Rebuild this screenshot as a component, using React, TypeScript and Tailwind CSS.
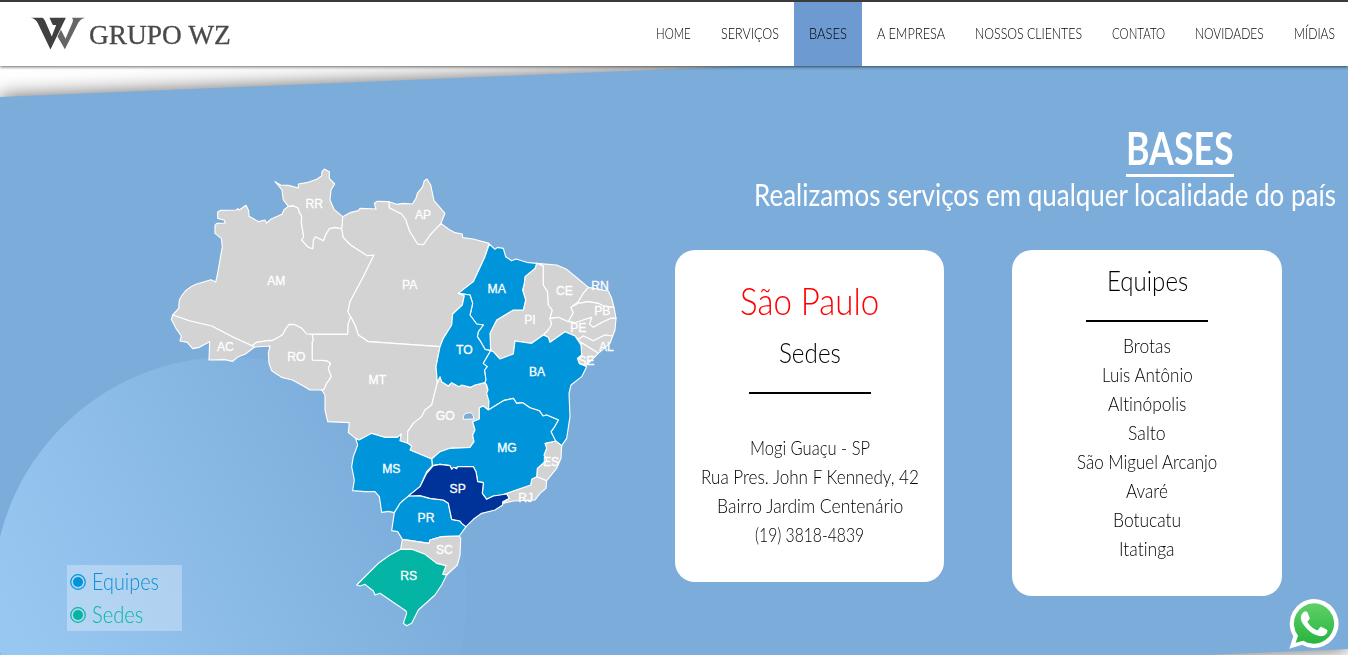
import { useLayoutEffect, useRef, useState, type ReactNode } from "react";

/** Single line of text condensed or stretched horizontally to a given width. */
function Fit({ w, children, className = "" }: { w: number; children: ReactNode; className?: string }) {
  const ref = useRef<HTMLSpanElement>(null);
  const [scale, setScale] = useState(1);
  useLayoutEffect(() => {
    if (ref.current) setScale(w / ref.current.offsetWidth);
  }, [w]);
  return (
    <span className={`flex justify-start whitespace-nowrap ${className}`} style={{ width: w }}>
      <span ref={ref} className="block shrink-0 origin-left" style={{ transform: `scaleX(${scale})` }}>
        {children}
      </span>
    </span>
  );
}

const nav: [string, number][] = [
  ["HOME", 35],
  ["SERVIÇOS", 58],
  ["BASES", 38],
  ["A EMPRESA", 68],
  ["NOSSOS CLIENTES", 107],
  ["CONTATO", 53],
  ["NOVIDADES", 69],
  ["MÍDIAS", 41],
];

const GRAY = "#d3d3d3";
const BLUE = "#0095db";
const NAVY = "#003399";
const TEAL = "#04b5a5";

type State = { id: string; fill: string; x: number; y: number; d: string };

const states: State[] = [
  { id: "AM", fill: GRAY, x: 349, y: 363, d: "M38 465 56 445 58 420Q75 385 108 373L153 359 167 366 172 345 187 260 184 235 165 220 165 196 170 190 196 189 192 180 173 175 173 156 182 151 229 150 233 146 238 150 258 136 266 152 267 169 296 185 315 180 320 189 332 178 366 163 372 149 385 139 400 137 415 145 418 158 425 168 424 188 431 230 425 240 445 262 458 266 460 240 467 230 490 242 498 222 508 206 525 202 545 206 550 232 572 255 622 287 642 285 610 350 570 425 564 455 572 470 565 490 563 523 440 522 425 505 405 494 388 493 378 505 368 524 345 538 332 543 329 541 290 547 276 557 220 532 155 498 90 483Z" },
  { id: "AC", fill: GRAY, x: 196, y: 561, d: "M38 465 34 478 48 505 64 528 60 543 82 547 98 566 118 562 149 545 147 600 195 599 218 604 235 590 255 583 284 561 276 557 220 532 155 498 90 483Z" },
  { id: "RO", fill: GRAY, x: 409, y: 590, d: "M276 557 290 547 329 541 332 543 345 538 368 524 378 505 388 493 405 494 425 505 440 522 457 523 460 540 457 545 457 600 500 602 512 610 505 625 514 650 500 670 492 688 485 690 450 690 430 678 397 660 365 652 335 632 327 610 325 580 330 558 284 561Z" },
  { id: "RR", fill: GRAY, x: 463, y: 131, d: "M345 65 362 75 385 76 415 84 415 72 440 68 470 58 485 48 486 35 493 27 508 35 508 55 524 72 513 90 510 120 522 148 548 170 547 195 545 206 525 202 508 206 498 222 490 242 467 230 460 240 458 266 445 262 425 240 431 230 424 188 425 168 418 158 415 145 400 137 385 139 370 120 366 90 355 76Z" },
  { id: "PA", fill: GRAY, x: 749, y: 374, d: "M548 170 570 158 595 152 600 145 648 147 643 130 652 124 687 125 688 143 725 162 738 180 748 212 773 252 790 254 810 225 843 190 865 207 885 218 907 222 908 233 940 237 987 250 975 290 940 365 895 400 913 407 907 435 878 462 875 495 850 535 840 560 625 545 595 525 585 495 572 470 564 455 570 425 610 350 642 285 622 287 572 255 550 232 545 206 547 195Z" },
  { id: "AP", fill: GRAY, x: 789, y: 164, d: "M687 125 710 133 730 130 757 132 768 115 772 100 788 80 793 62 801 57 812 75 822 122 855 160 843 190 810 225 790 254 773 252 748 212 738 180 725 162 688 143Z" },
  { id: "MT", fill: GRAY, x: 652, y: 659, d: "M457 523 563 523 565 490 572 470 585 495 595 525 625 545 840 560 828 620 832 668 815 735 795 750 785 770 760 790 743 815 743 850 720 842 724 822 712 832 675 832 635 820 597 840 587 835 565 818 568 788 503 785 495 750 495 705 485 690 492 688 500 670 514 650 505 625 512 610 500 602 457 600 457 545 460 540Z" },
  { id: "GO", fill: GRAY, x: 856, y: 767, d: "M832 668 840 650 845 665 865 678 875 668 897 680 905 675 932 682 945 675 975 668 980 675 987 725 985 750 970 738 958 743 958 777 938 785 945 810 938 825 942 845 930 862 870 865 840 875 815 897 750 870 755 858 743 850 743 815 760 790 785 770 795 750 815 735Z" },
  { id: "PI", fill: GRAY, x: 1110, y: 479, d: "M1130 310 1150 317 1150 375 1163 395 1165 435 1177 450 1170 475 1175 492 1165 510 1150 525 1115 550 1065 543 1060 582 1020 597 1000 575 992 572 990 520 1010 480 1060 450 1090 450 1097 420 1088 390 1093 370 1095 350 1125 325Z" },
  { id: "CE", fill: GRAY, x: 1213, y: 393, d: "M1130 310 1190 315 1220 328 1255 357 1285 382 1270 400 1255 425 1233 442 1240 458 1225 485 1195 472 1170 475 1177 450 1165 435 1163 395 1150 375 1150 317Z" },
  { id: "RN", fill: GRAY, x: 1320, y: 378, d: "M1285 382 1345 393 1355 415 1362 442 1330 438 1315 430 1285 425 1255 430 1233 442 1255 425 1270 400Z" },
  { id: "PB", fill: GRAY, x: 1327, y: 452, d: "M1362 442 1368 475 1355 474 1330 485 1300 502 1288 492 1295 472 1245 488 1225 485 1240 458 1233 442 1255 430 1285 425 1315 430 1330 438Z" },
  { id: "PE", fill: GRAY, x: 1255, y: 503, d: "M1368 475 1365 510 1358 528 1335 525 1300 542 1270 528 1255 538 1245 528 1215 515 1170 547 1165 532 1150 525 1165 510 1175 492 1170 475 1195 472 1225 485 1245 488 1295 472 1288 492 1300 502 1330 485 1355 474Z" },
  { id: "AL", fill: GRAY, x: 1339, y: 559, d: "M1358 528 1350 550 1315 580 1260 545 1255 538 1270 528 1300 542 1335 525Z" },
  { id: "SE", fill: GRAY, x: 1279, y: 602, d: "M1315 580 1295 600 1275 618 1258 610 1252 595 1265 585 1263 555 1260 545Z" },
  { id: "MA", fill: BLUE, x: 1010, y: 387, d: "M988 252 1005 268 1012 262 1030 265 1037 290 1055 302 1068 297 1100 307 1130 310 1125 325 1095 350 1093 370 1088 390 1097 420 1090 450 1060 450 1010 480 990 520 992 572 975 568 962 545 952 530 955 515 970 495 950 492 930 465 938 430 930 405 895 400 940 365 975 290Z" },
  { id: "TO", fill: BLUE, x: 913, y: 569, d: "M895 400 930 405 938 430 930 465 950 492 970 495 955 515 952 530 962 545 975 568 992 572 970 610 982 620 974 630 978 660 975 668 945 675 932 682 905 675 897 680 875 668 865 678 845 665 840 650 832 668 828 620 840 560 850 535 875 495 878 462 907 435 913 407Z" },
  { id: "BA", fill: BLUE, x: 1131, y: 635, d: "M992 572 1000 575 1020 597 1060 582 1065 543 1115 550 1150 525 1165 532 1170 547 1215 515 1245 528 1263 555 1265 585 1252 595 1258 610 1280 620 1265 650 1233 675 1227 700 1230 770 1220 835 1205 857 1185 842 1173 815 1182 803 1195 780 1160 765 1149 768 1138 752 1110 743 1088 728 1070 730 1060 715 1030 722 985 750 987 725 980 700 984 690 980 675 975 668 978 660 974 630 982 620 970 610Z" },
  { id: "ES", fill: GRAY, x: 1173, y: 905, d: "M1187 843 1205 857 1203 895 1190 925 1160 962 1130 950 1132 925 1160 900 1152 885 1160 865 1155 850Z" },
  { id: "RJ", fill: GRAY, x: 1097, y: 1012, d: "M1130 950 1160 962 1158 985 1140 1000 1125 1020 1060 1023 1028 1030 1048 1015 1040 1002 1000 1008 1025 1005 1075 988 1112 975 1115 958Z" },
  { id: "MG", fill: BLUE, x: 1041, y: 864, d: "M815 897 840 875 870 865 930 862 942 845 938 825 945 810 938 785 958 777 958 743 970 738 985 750 1030 722 1060 715 1070 730 1088 728 1110 743 1138 752 1149 768 1160 765 1195 780 1182 803 1173 815 1187 843 1155 850 1160 865 1152 885 1160 900 1132 925 1130 950 1115 958 1112 975 1075 988 1025 1005 1000 1008 980 1018 967 1000 970 968 953 965 948 935 940 920 890 922 875 928 870 917 840 913 817 917Z" },
  { id: "MS", fill: BLUE, x: 694, y: 925, d: "M587 835 597 840 635 820 675 832 712 832 724 822 720 842 743 850 755 858 750 870 815 897 817 917 800 935 780 980 747 1007 725 1025 703 1058 685 1054 665 1057 658 1010 645 995 615 995 578 992 583 960 575 920 580 890 593 855Z" },
  { id: "PR", fill: BLUE, x: 798, y: 1073, d: "M747 1007 720 1030 703 1058 695 1112 713 1115 727 1138 807 1150 810 1140 845 1130 898 1128 918 1100 905 1090 900 1083 875 1078 865 1030 850 1020 810 1015 780 1007Z" },
  { id: "SC", fill: GRAY, x: 853, y: 1169, d: "M727 1138 722 1168 755 1168 795 1183 830 1210 858 1217 848 1243 860 1245 892 1215 900 1185 902 1135 898 1128 845 1130 810 1140 807 1150Z" },
  { id: "SP", fill: NAVY, x: 893, y: 986, d: "M745 1008 780 980 800 940 820 917 840 913 870 917 875 928 880 922 890 926 893 920 940 920 948 935 953 965 970 968 967 1000 980 1018 1000 1008 1040 1002 1048 1015 1028 1025 1028 1035 1005 1050 965 1060 940 1078 918 1100 905 1090 900 1083 875 1078 865 1030 850 1020 810 1015 780 1007Z" },
  { id: "RS", fill: TEAL, x: 746, y: 1247, d: "M722 1168 755 1168 795 1183 830 1210 858 1217 848 1243 860 1245 845 1275 825 1305 775 1350 755 1390 740 1397 730 1390 740 1360 738 1353 660 1300 645 1305 640 1293 615 1273 600 1278 590 1275 655 1210 690 1185Z" },
];

function BrazilMap() {
  return (
    <svg viewBox="0 0 1410 1440" className="block h-[480px] w-[470px]">
      {states.map((s) => (
        <path key={s.id} d={s.d} fill={s.fill} stroke="#fff" strokeWidth="3.4" strokeLinejoin="round" />
      ))}
      <path d="M910 778V768Q914 758 928 758 942 759 941 777Z" fill="#7cacd9" stroke="#fff" strokeWidth="3" />
      <g fill="#fff" fontFamily="Liberation Sans, sans-serif" fontSize="36.5" textAnchor="middle" stroke="#fff" strokeWidth="0.9">
        {states.map((s) => (
          <text key={s.id} x={s.x} y={s.y + 13}>{s.id}</text>
        ))}
      </g>
    </svg>
  );
}

function Logo() {
  return (
    <div className="flex items-start pl-[30px] pt-[15px]">
      <svg viewBox="0 0 164 98" className="h-[33px] w-[55px]">
        <path d="M2 2H37Q42 4 45 12L65 58 78 24 68 24 58 2H107L61 97 23 18Q16 4 2 2Z" fill="#404040" />
        <path d="M92 38 106 65 126 18Q131 5 124 2H164Q151 5 144 17L104 96 82 58Z" fill="#666" />
      </svg>
      <Fit w={142} className="ml-[4px] font-['Liberation_Serif',serif] text-[27px] leading-[36px] text-[#4a4a4a] [-webkit-text-stroke:0.3px_#4a4a4a]">
        GRUPO WZ
      </Fit>
    </div>
  );
}

function LegendRow({ label, w, color, text }: { label: string; w: number; color: string; text: string }) {
  return (
    <div className={`flex h-[33px] items-center gap-[6px] pl-[3px] ${text}`}>
      <svg viewBox="0 0 16 16" className="size-4">
        <circle cx="8" cy="8" r="7.3" fill="none" stroke={color} strokeWidth="1.2" />
        <circle cx="8" cy="8" r="5" fill={color} />
      </svg>
      <Fit w={w} className="text-[22.5px] leading-[31px]">{label}</Fit>
    </div>
  );
}

const address: [string, number][] = [
  ["Mogi Guaçu - SP", 120],
  ["Rua Pres. John F Kennedy, 42", 218],
  ["Bairro Jardim Centenário", 186],
  ["(19) 3818-4839", 109],
];

const teams: [string, number][] = [
  ["Brotas", 48],
  ["Luis Antônio", 91],
  ["Altinópolis", 78],
  ["Salto", 38],
  ["São Miguel Arcanjo", 140],
  ["Avaré", 42],
  ["Botucatu", 68],
  ["Itatinga", 56],
];

function WhatsApp() {
  return (
    <svg viewBox="0 0 150 150" className="absolute left-[1289px] top-[599px] size-[50px]">
      <defs>
        <linearGradient id="wa" x1="0" y1="0" x2="0" y2="1">
          <stop offset="0" stopColor="#5fd068" />
          <stop offset="1" stopColor="#28b440" />
        </linearGradient>
      </defs>
      <path d="M75 0A73.500 73.500 0 1 1 39 137.500L1 149 13 112A73.500 73.500 0 0 1 75 0Z" fill="#fff" />
      <path d="M75 13A60.500 60.500 0 1 1 43 125L20 131 27 110A60.500 60.500 0 0 1 75 13Z" fill="url(#wa)" />
      <path
        transform="translate(75 74) scale(6.600) translate(-12 -11.900)"
        fill="#fff"
        d="M17.472 14.382c-.297-.149-1.758-.867-2.03-.967-.273-.099-.471-.148-.67.15-.197.297-.767.966-.94 1.164-.173.199-.347.223-.644.075-.297-.15-1.255-.463-2.39-1.475-.883-.788-1.48-1.761-1.653-2.059-.173-.297-.018-.458.13-.606.134-.133.298-.347.446-.52.149-.174.198-.298.298-.497.099-.198.05-.371-.025-.52-.075-.149-.669-1.612-.916-2.207-.242-.579-.487-.5-.669-.51-.173-.008-.371-.01-.57-.01-.198 0-.52.074-.792.372-.272.297-1.04 1.016-1.04 2.479 0 1.462 1.065 2.875 1.213 3.074.149.198 2.096 3.2 5.077 4.487.709.306 1.262.489 1.694.625.712.227 1.36.195 1.871.118.571-.085 1.758-.719 2.006-1.413.248-.694.248-1.289.173-1.413-.074-.124-.272-.198-.57-.347"
      />
    </svg>
  );
}

export default function App() {
  return (
    <div className="relative flex h-[655px] w-[1348px] flex-col overflow-hidden bg-white font-['Lato',sans-serif] font-light [font-variant-ligatures:none]">
      <header className="relative z-10 flex h-[66px] shrink-0 justify-between border-t-2 border-[#3b3b3b] bg-white shadow-[0_1px_3px_rgba(0,0,0,0.6)]">
        <Logo />
        <nav className="-mr-0.5 flex">
          {nav.map(([label, w]) => (
            <a
              key={label}
              className={`flex items-center px-[15px] pb-0.5 text-[16px] text-black ${label === "BASES" ? "bg-[#6d9ad0]" : ""}`}
            >
              <Fit w={w}>{label}</Fit>
            </a>
          ))}
        </nav>
      </header>

      <div className="absolute inset-0 [filter:drop-shadow(0_0_10px_rgba(0,0,0,0.6))]">
        <div className="relative size-full overflow-hidden bg-[#7cacd9] [clip-path:polygon(0_97px,720px_67px,1348px_41px,1348px_649px,1180px_656px,0_656px)]">
          <div className="absolute -left-[7px] top-[357px] size-[474px] rounded-full bg-[linear-gradient(61deg,#98c8f2_18%,#7eaedb_78%)]" />
        </div>
      </div>

      <main className="relative flex flex-1">
        <div className="w-[655px] shrink-0 pl-[160px] pt-[94px]">
          <BrazilMap />
        </div>
        <aside className="absolute left-[67px] top-[499px] h-[66px] w-[115px] bg-white/30">
          <LegendRow label="Equipes" w={67} color="#0095db" text="text-[#0c8fd6]" />
          <LegendRow label="Sedes" w={51} color="#04b5a5" text="text-[#04b5a5]" />
        </aside>

        <div className="flex flex-1 flex-col pl-5 pt-[54px] text-center text-black">
          <div className="flex flex-col items-end pr-3 text-white">
            <h1 className="mr-[102px] border-b-[3px] border-white font-bold">
              <Fit w={108} className="pt-px text-[46px] leading-[53px]">BASES</Fit>
            </h1>
            <Fit w={582} className="text-[30px] font-normal leading-[34px]">
              Realizamos serviços em qualquer localidade do país
            </Fit>
          </div>

          <div className="mt-[39px] flex items-start gap-[68px]">
            <section className="flex h-[332px] w-[269px] flex-col items-center rounded-[20px] bg-white pt-7">
              <Fit w={139} className="text-[38px] leading-[44px] text-[#f00]">São Paulo</Fit>
              <Fit w={62} className="mt-[14px] text-[27px] leading-[34px]">Sedes</Fit>
              <div className="mb-[39px] mt-[22px] h-0.5 w-[122px] shrink-0 bg-black" />
              {address.map(([line, w]) => (
                <Fit key={line} w={w} className="text-[20px] leading-[29px]">{line}</Fit>
              ))}
            </section>
            <section className="flex h-[346px] w-[270px] flex-col items-center rounded-[20px] bg-white pt-3.5">
              <Fit w={81} className="text-[27px] leading-[34px]">Equipes</Fit>
              <div className="mb-[9px] mt-[22px] h-0.5 w-[122px] shrink-0 bg-black" />
              {teams.map(([line, w]) => (
                <Fit key={line} w={w} className="text-[20px] leading-[29px]">{line}</Fit>
              ))}
            </section>
          </div>
        </div>
      </main>
      <WhatsApp />
    </div>
  );
}
